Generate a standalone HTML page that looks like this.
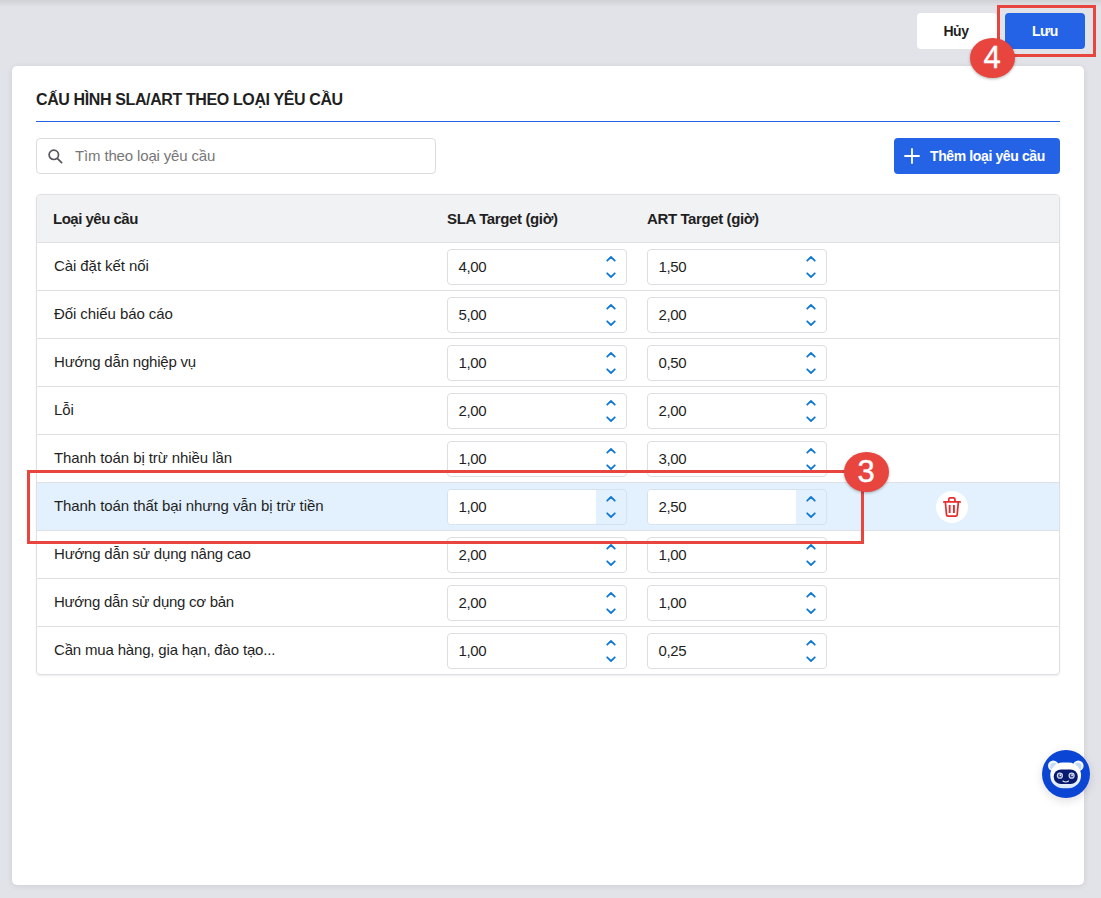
<!DOCTYPE html>
<html lang="vi">
<head>
<meta charset="utf-8">
<title>Cấu hình SLA/ART</title>
<style>
*{box-sizing:border-box;margin:0;padding:0}
html,body{width:1101px;height:898px;overflow:hidden}
body{background:#e2e3e8;font-family:"Liberation Sans",sans-serif;color:#1f1f1f;position:relative}
.topshade{position:absolute;left:0;top:0;width:1101px;height:7px;background:linear-gradient(#d0d1d5,#d9dade 50%,#e2e3e8)}
.btn{position:absolute;top:13px;height:36px;border-radius:4px;font-weight:700;font-size:14px;letter-spacing:-0.4px;display:flex;align-items:center;justify-content:center}
.btn.cancel{left:917px;width:80px;padding-right:2px;background:#fff;color:#1f1f1f}
.btn.save{left:1005px;width:80px;background:#2563e6;color:#fff}
.card{position:absolute;left:12px;top:66px;width:1072px;height:819px;background:#fff;border-radius:5px;box-shadow:0 1px 6px rgba(0,0,0,.09)}
.title{position:absolute;left:24px;top:25px;font-weight:700;font-size:16px;letter-spacing:-0.38px;color:#1f1f1f;white-space:nowrap}
.tline{position:absolute;left:24px;top:55px;width:1024px;height:1px;background:#2563e6}
.search{position:absolute;left:24px;top:72px;width:400px;height:36px;border:1px solid #d9dbe0;border-radius:4px;background:#fff}
.search span{position:absolute;left:38px;top:7.500px;font-size:15px;letter-spacing:-0.15px;color:#777}
.search svg{position:absolute;left:10.500px;top:9.500px}
.add{position:absolute;left:882px;top:72px;width:166px;height:36px;border-radius:4px;background:#2563e6;color:#fff;font-weight:700;font-size:14px;letter-spacing:-0.38px}
.add span{position:absolute;left:36px;top:9.500px;white-space:nowrap}
.add svg{position:absolute;left:10px;top:10px}
.table{position:absolute;left:24px;top:128px;width:1024px;height:481px;border:1px solid #dfe0e4;border-radius:4px;overflow:hidden;box-shadow:0 1px 2px rgba(0,0,0,.08)}
.th{height:48px;background:#f1f2f4;border-bottom:1px solid #dfe0e4;position:relative;font-weight:700;font-size:15px;letter-spacing:-0.5px}
.th span{position:absolute;top:15px;white-space:nowrap}
.row{height:48px;border-bottom:1px solid #dfe0e4;position:relative;font-size:15px}
.row:last-child{border-bottom:none;height:47px}
.row.hl{background:#e2f1fd}
.row .name{position:absolute;left:17px;top:13.500px;letter-spacing:-0.08px;white-space:nowrap}
.num{position:absolute;top:6px;width:180px;height:36px;border:1px solid #dcdee2;border-radius:4px;background:#fff}
.num.a{left:410px}.num.b{left:610px}
.num span{position:absolute;left:10.500px;top:8px;font-size:15px;letter-spacing:-0.4px}
.num svg{position:absolute;right:9px;top:0}
.row.hl .num{background:transparent;border-color:#d5e3ef}
.row.hl .num i{position:absolute;left:0;top:0;width:148px;height:34px;background:#fff;border-radius:3px 0 0 3px}
.trash{position:absolute;left:899px;top:8px;width:32px;height:32px;border-radius:50%;background:#fff}
.trash svg{position:absolute;left:0;top:0}
.redbox{position:absolute;border:3px solid #e8453f}
.badge{position:absolute;width:45px;height:40px;border-radius:50%;background:#e8453f;color:#fff;font-size:31px;text-align:center;line-height:39px;text-indent:-1px;box-shadow:0 1px 3px rgba(0,0,0,.3);-webkit-text-stroke:0.4px #fff}
.bot{position:absolute;left:1042px;top:750px;width:48px;height:48px;border-radius:50%;background:#0a45d4;box-shadow:0 3px 10px rgba(0,0,0,.13)}
.bot svg{position:absolute;left:0;top:0}
</style>
</head>
<body>
<div class="topshade"></div>
<div class="btn cancel">Hủy</div>
<div class="btn save">Lưu</div>
<div class="card">
  <div class="title">CẤU HÌNH SLA/ART THEO LOẠI YÊU CẦU</div>
  <div class="tline"></div>
  <div class="search">
    <svg width="15" height="15" viewBox="0 0 15 15" fill="none" stroke="#54575e" stroke-width="1.7"><circle cx="5.800" cy="5.800" r="4.700"/><path d="M9.300 9.300l4.300 4.300" stroke-linecap="round"/></svg>
    <span>Tìm theo loại yêu cầu</span>
  </div>
  <div class="add">
    <svg width="16" height="16" viewBox="0 0 16 16" stroke="#fff" stroke-width="1.8" stroke-linecap="round"><path d="M8 1v14M1 8h14"/></svg>
    <span>Thêm loại yêu cầu</span>
  </div>
  <div class="table" id="tbl">
    <div class="th"><span style="left:16px">Loại yêu cầu</span><span style="left:410px;letter-spacing:-0.37px">SLA Target (giờ)</span><span style="left:610px;letter-spacing:-0.39px">ART Target (giờ)</span></div>
    <div class="row"><div class="name">Cài đặt kết nối</div><div class="num a"><span>4,00</span><svg width="12" height="34" viewBox="0 0 12 34" fill="none" stroke="#0f78d9" stroke-width="1.75" stroke-linecap="round" stroke-linejoin="round"><path d="M2.2 10.7L6 7l3.8 3.700"/><path d="M2.2 23.300L6 27l3.800-3.700"/></svg></div><div class="num b"><span>1,50</span><svg width="12" height="34" viewBox="0 0 12 34" fill="none" stroke="#0f78d9" stroke-width="1.75" stroke-linecap="round" stroke-linejoin="round"><path d="M2.2 10.7L6 7l3.8 3.700"/><path d="M2.2 23.300L6 27l3.800-3.700"/></svg></div></div>
    <div class="row"><div class="name">Đối chiếu báo cáo</div><div class="num a"><span>5,00</span><svg width="12" height="34" viewBox="0 0 12 34" fill="none" stroke="#0f78d9" stroke-width="1.75" stroke-linecap="round" stroke-linejoin="round"><path d="M2.2 10.7L6 7l3.8 3.700"/><path d="M2.2 23.300L6 27l3.800-3.700"/></svg></div><div class="num b"><span>2,00</span><svg width="12" height="34" viewBox="0 0 12 34" fill="none" stroke="#0f78d9" stroke-width="1.75" stroke-linecap="round" stroke-linejoin="round"><path d="M2.2 10.7L6 7l3.8 3.700"/><path d="M2.2 23.300L6 27l3.800-3.700"/></svg></div></div>
    <div class="row"><div class="name" style="letter-spacing:-0.2px">Hướng dẫn nghiệp vụ</div><div class="num a"><span>1,00</span><svg width="12" height="34" viewBox="0 0 12 34" fill="none" stroke="#0f78d9" stroke-width="1.75" stroke-linecap="round" stroke-linejoin="round"><path d="M2.2 10.7L6 7l3.8 3.700"/><path d="M2.2 23.300L6 27l3.800-3.700"/></svg></div><div class="num b"><span>0,50</span><svg width="12" height="34" viewBox="0 0 12 34" fill="none" stroke="#0f78d9" stroke-width="1.75" stroke-linecap="round" stroke-linejoin="round"><path d="M2.2 10.7L6 7l3.8 3.700"/><path d="M2.2 23.300L6 27l3.800-3.700"/></svg></div></div>
    <div class="row"><div class="name">Lỗi</div><div class="num a"><span>2,00</span><svg width="12" height="34" viewBox="0 0 12 34" fill="none" stroke="#0f78d9" stroke-width="1.75" stroke-linecap="round" stroke-linejoin="round"><path d="M2.2 10.7L6 7l3.8 3.700"/><path d="M2.2 23.300L6 27l3.800-3.700"/></svg></div><div class="num b"><span>2,00</span><svg width="12" height="34" viewBox="0 0 12 34" fill="none" stroke="#0f78d9" stroke-width="1.75" stroke-linecap="round" stroke-linejoin="round"><path d="M2.2 10.7L6 7l3.8 3.700"/><path d="M2.2 23.300L6 27l3.800-3.700"/></svg></div></div>
    <div class="row"><div class="name">Thanh toán bị trừ nhiều lần</div><div class="num a"><span>1,00</span><svg width="12" height="34" viewBox="0 0 12 34" fill="none" stroke="#0f78d9" stroke-width="1.75" stroke-linecap="round" stroke-linejoin="round"><path d="M2.2 10.7L6 7l3.8 3.700"/><path d="M2.2 23.300L6 27l3.800-3.700"/></svg></div><div class="num b"><span>3,00</span><svg width="12" height="34" viewBox="0 0 12 34" fill="none" stroke="#0f78d9" stroke-width="1.75" stroke-linecap="round" stroke-linejoin="round"><path d="M2.2 10.7L6 7l3.8 3.700"/><path d="M2.2 23.300L6 27l3.800-3.700"/></svg></div></div>
    <div class="row hl"><div class="name">Thanh toán thất bại nhưng vẫn bị trừ tiền</div><div class="num a"><i></i><span>1,00</span><svg width="12" height="34" viewBox="0 0 12 34" fill="none" stroke="#0f78d9" stroke-width="1.75" stroke-linecap="round" stroke-linejoin="round"><path d="M2.2 10.7L6 7l3.8 3.700"/><path d="M2.2 23.300L6 27l3.800-3.700"/></svg></div><div class="num b"><i></i><span>2,50</span><svg width="12" height="34" viewBox="0 0 12 34" fill="none" stroke="#0f78d9" stroke-width="1.75" stroke-linecap="round" stroke-linejoin="round"><path d="M2.2 10.7L6 7l3.8 3.700"/><path d="M2.2 23.300L6 27l3.800-3.700"/></svg></div><div class="trash"><svg width="32" height="32" viewBox="0 0 32 32" fill="none" stroke="#e62e2e" stroke-width="1.7" stroke-linejoin="round"><path d="M7.800 10.900H24.200" stroke-linecap="round"/><path d="M12.750 10.900V8.450a1.500 1.500 0 0 1 1.500-1.500h3.200a1.500 1.500 0 0 1 1.500 1.500V10.900"/><path d="M9.350 10.900l1.150 12.700a1.600 1.600 0 0 0 1.600 1.450h7.500a1.600 1.600 0 0 0 1.600-1.450l1.150-12.700"/><path d="M13.650 14V21.900M17.950 14V21.900" stroke-width="1.900"/></svg></div></div>
    <div class="row"><div class="name" style="letter-spacing:-0.2px">Hướng dẫn sử dụng nâng cao</div><div class="num a"><span>2,00</span><svg width="12" height="34" viewBox="0 0 12 34" fill="none" stroke="#0f78d9" stroke-width="1.75" stroke-linecap="round" stroke-linejoin="round"><path d="M2.2 10.7L6 7l3.8 3.700"/><path d="M2.2 23.300L6 27l3.800-3.700"/></svg></div><div class="num b"><span>1,00</span><svg width="12" height="34" viewBox="0 0 12 34" fill="none" stroke="#0f78d9" stroke-width="1.75" stroke-linecap="round" stroke-linejoin="round"><path d="M2.2 10.7L6 7l3.8 3.700"/><path d="M2.2 23.300L6 27l3.800-3.700"/></svg></div></div>
    <div class="row"><div class="name" style="letter-spacing:-0.28px">Hướng dẫn sử dụng cơ bản</div><div class="num a"><span>2,00</span><svg width="12" height="34" viewBox="0 0 12 34" fill="none" stroke="#0f78d9" stroke-width="1.75" stroke-linecap="round" stroke-linejoin="round"><path d="M2.2 10.7L6 7l3.8 3.700"/><path d="M2.2 23.300L6 27l3.800-3.700"/></svg></div><div class="num b"><span>1,00</span><svg width="12" height="34" viewBox="0 0 12 34" fill="none" stroke="#0f78d9" stroke-width="1.75" stroke-linecap="round" stroke-linejoin="round"><path d="M2.2 10.7L6 7l3.8 3.700"/><path d="M2.2 23.300L6 27l3.800-3.700"/></svg></div></div>
    <div class="row"><div class="name" style="letter-spacing:-0.17px">Cần mua hàng, gia hạn, đào tạo...</div><div class="num a"><span>1,00</span><svg width="12" height="34" viewBox="0 0 12 34" fill="none" stroke="#0f78d9" stroke-width="1.75" stroke-linecap="round" stroke-linejoin="round"><path d="M2.2 10.7L6 7l3.8 3.700"/><path d="M2.2 23.300L6 27l3.800-3.700"/></svg></div><div class="num b"><span>0,25</span><svg width="12" height="34" viewBox="0 0 12 34" fill="none" stroke="#0f78d9" stroke-width="1.75" stroke-linecap="round" stroke-linejoin="round"><path d="M2.2 10.7L6 7l3.8 3.700"/><path d="M2.2 23.300L6 27l3.800-3.700"/></svg></div></div>
  </div>
</div>
<div class="redbox" style="left:997px;top:5px;width:99px;height:52px"></div>
<div class="badge" style="left:970px;top:38px">4</div>
<div class="redbox" style="left:27px;top:470px;width:837px;height:74px"></div>
<div class="badge" style="left:844px;top:452px">3</div>
<div class="bot"><svg width="48" height="48" viewBox="0 0 48 48"><defs><linearGradient id="hg" x1="0" y1="0" x2="0" y2="1"><stop offset="0.45" stop-color="#ffffff"/><stop offset="1" stop-color="#d6e6fb"/></linearGradient></defs><circle cx="11.300" cy="15.700" r="5.300" fill="#f4f8fe"/><circle cx="36.300" cy="15.700" r="5.300" fill="#f4f8fe"/><circle cx="11.800" cy="16.400" r="3.700" fill="#c3dbf8"/><circle cx="35.800" cy="16.400" r="3.700" fill="#c3dbf8"/><rect x="8.300" y="12.600" width="30.700" height="25.600" rx="12.500" fill="url(#hg)"/><rect x="11.700" y="19.500" width="24.100" height="14.500" rx="7.250" fill="#071a6e"/><circle cx="17.900" cy="25.700" r="3.100" fill="#cfd8ee"/><circle cx="29.600" cy="25.700" r="3.100" fill="#cfd8ee"/><circle cx="17.900" cy="25.700" r="1.900" fill="#3b4a8c"/><circle cx="29.600" cy="25.700" r="1.900" fill="#3b4a8c"/><circle cx="18.400" cy="25.100" r="0.900" fill="#fff"/><circle cx="30.100" cy="25.100" r="0.900" fill="#fff"/><path d="M20.900 31q2.850 1.900 5.700 0" stroke="#eef3fd" stroke-width="1.100" fill="none" stroke-linecap="round"/></svg></div>
</body>
</html>
